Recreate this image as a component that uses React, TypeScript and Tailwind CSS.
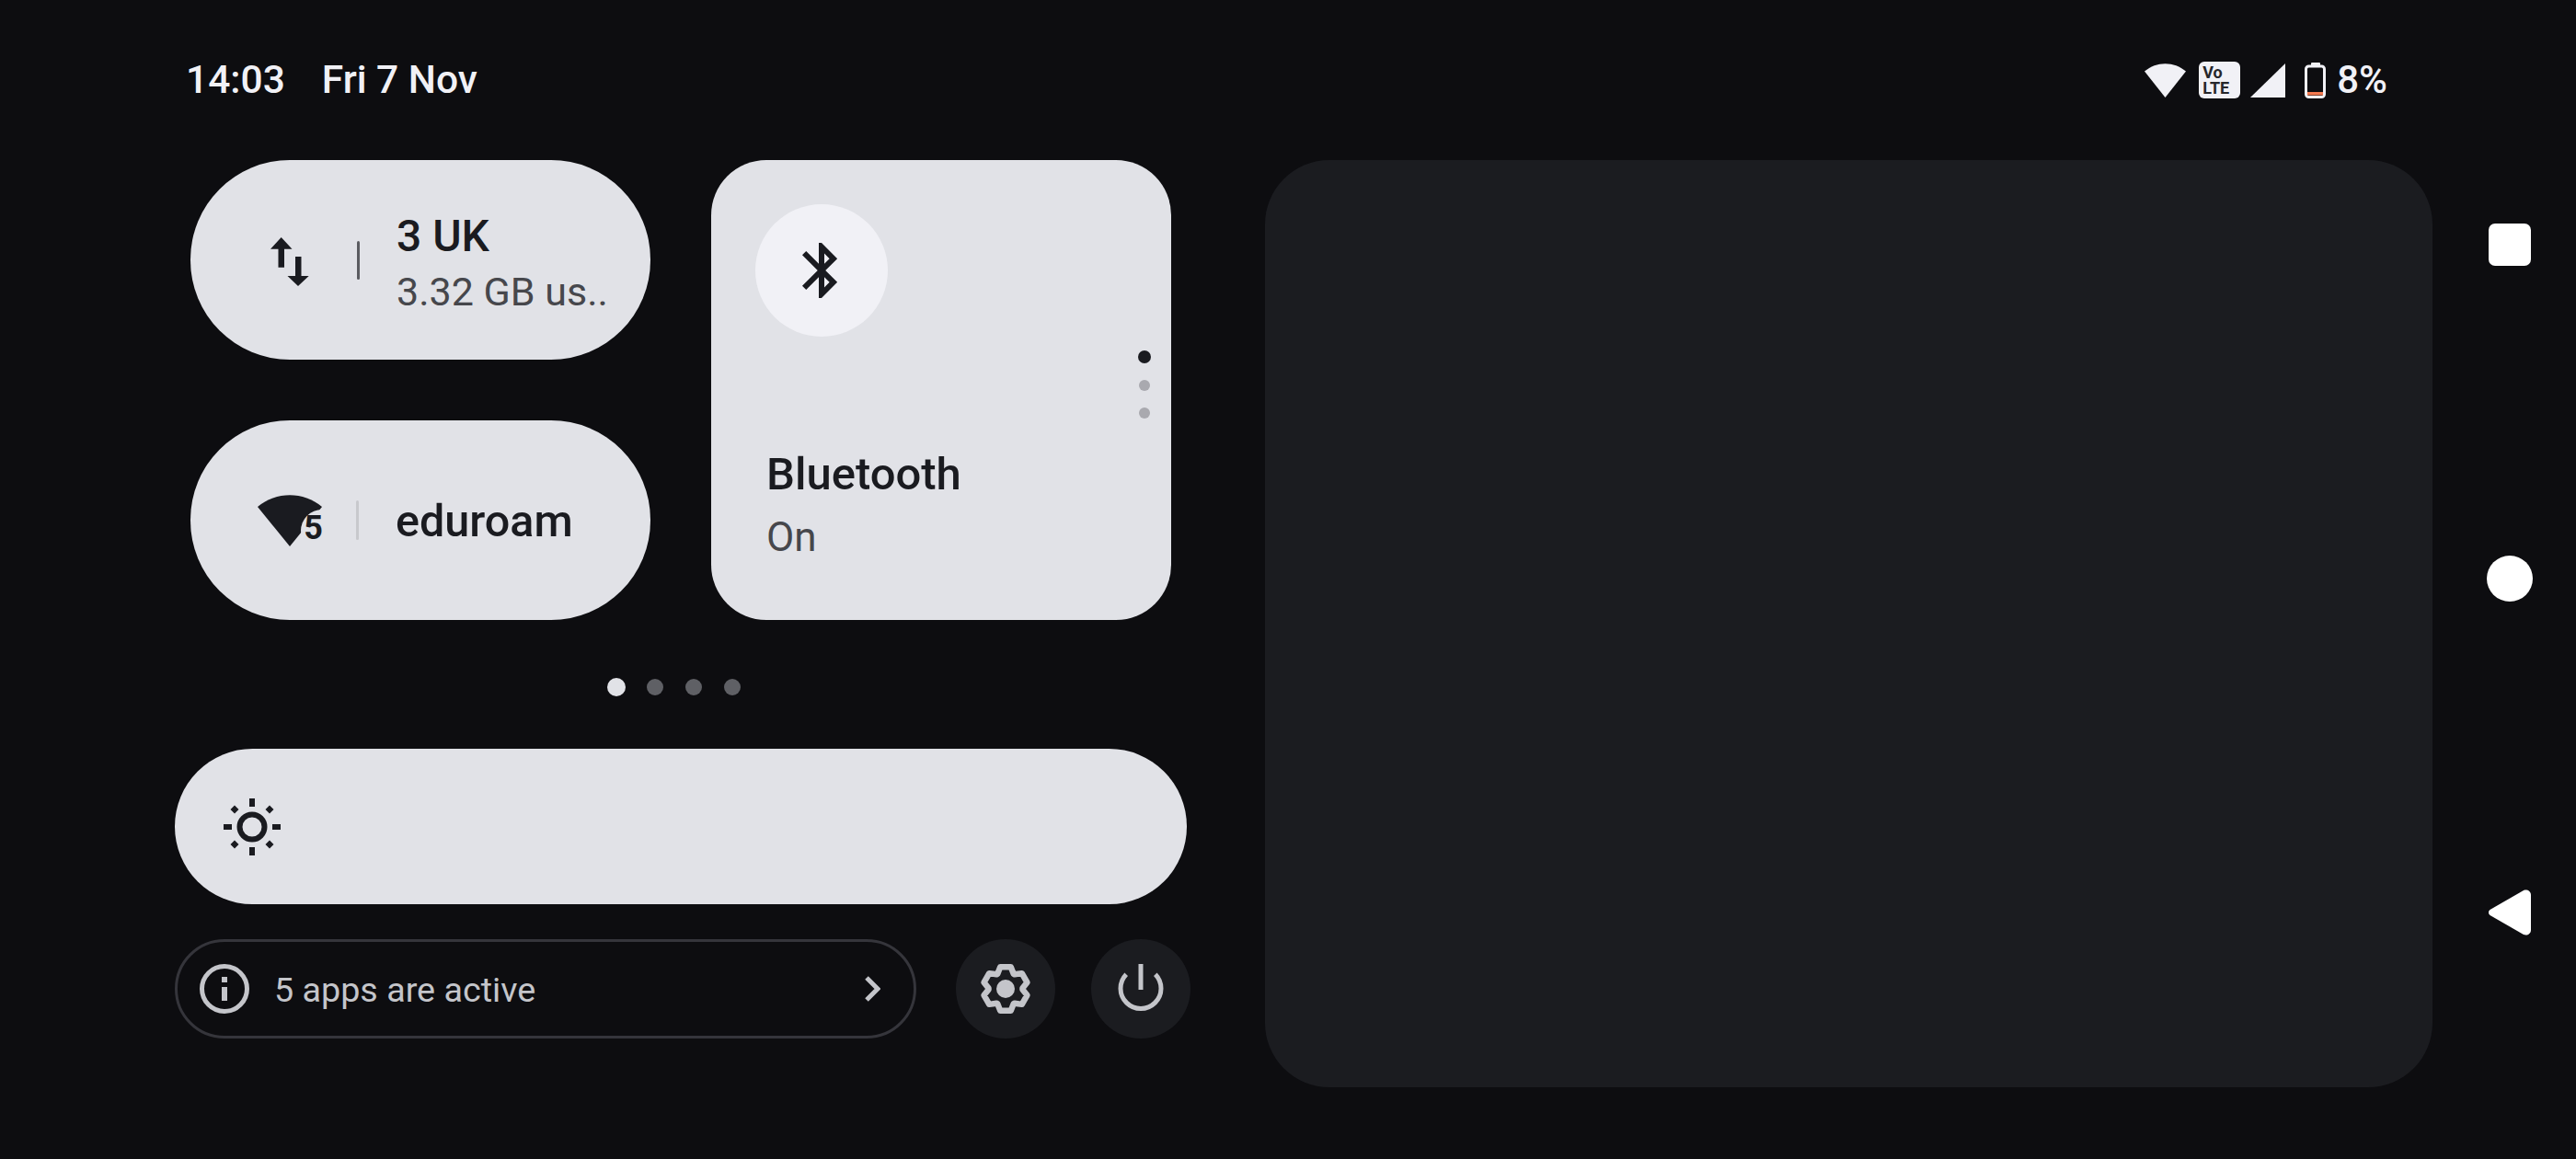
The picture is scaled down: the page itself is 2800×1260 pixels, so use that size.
import React from "react";

function gearPath() {
  const cx = 34, cy = 34;
  const pts: string[] = [];
  for (let i = 0; i < 6; i++) {
    const a = (i * 60 - 90) * Math.PI / 180;
    const spec: [number, number][] = [[-31, 18.5], [-15, 24.5], [15, 24.5], [31, 18.5]];
    for (const [d, r] of spec) {
      const t = a + d * Math.PI / 180 * 0.9;
      pts.push(`${(cx + r * Math.cos(t)).toFixed(2)} ${(cy + r * Math.sin(t)).toFixed(2)}`);
    }
  }
  return "M" + pts.join("L") + "Z";
}

function WifiWedge({ fill }: { fill: string }) {
  return <path d="M0 13 C20 -4 50 -4 70 13 L35 56 Z" fill={fill} />;
}

function DataTile() {
  return (
    <div className="flex h-[217px] w-[500px] items-center rounded-[108px] bg-[#e1e2e7] pl-[83px]">
      <svg width="50" height="60" viewBox="0 0 50 60" className="shrink-0 text-[#1a1b20]" fill="currentColor">
        <path d="M15.7 5L27.5 17.7H19V37.7H12.5V17.7H4Z" />
        <path d="M31 26H37.5V47H45.7L34 58L22.5 47H31Z" />
      </svg>
      <div className="ml-[48px] h-[42px] w-[3px] rounded-full bg-[#5a5b60]" />
      <div className="mt-[6px] ml-[40px] flex flex-col">
        <span className="text-[48px] leading-[56px] font-medium text-[#1a1b20]">3 UK</span>
        <span className="mt-[6px] text-[43px] leading-[52px] text-[#46474c] whitespace-nowrap">3.32 GB us..</span>
      </div>
    </div>
  );
}

function WifiTile() {
  return (
    <div className="flex h-[217px] w-[500px] items-center rounded-[108px] bg-[#e1e2e7] pl-[73px]">
      <div className="relative h-[56px] w-[70px] shrink-0">
        <svg width="70" height="56" viewBox="0 0 70 56">
          <WifiWedge fill="#1a1b20" />
          <circle cx="70" cy="39" r="23" fill="#e1e2e7" />
        </svg>
        <span className="absolute top-[16px] right-[-1px] text-[36px] leading-[40px] font-bold text-[#1a1b20]">5</span>
      </div>
      <div className="ml-[37px] h-[43px] w-[3px] rounded-full bg-[#c8c9cd]" />
      <span className="mt-[3px] ml-[40px] text-[48.5px] leading-[56px] font-medium text-[#1a1b20]">eduroam</span>
    </div>
  );
}

function BluetoothTile() {
  return (
    <div className="relative h-[500px] w-[500px] rounded-[60px] bg-[#e1e2e7] pt-[48px] pl-[48px]">
      <div className="flex h-[144px] w-[144px] items-center justify-center rounded-full bg-[#f1f1f6]">
        <svg width="72" height="72" viewBox="0 0 24 24" fill="#1a1b20">
          <path d="M17.71 7.71L12 2h-1v7.59L6.41 5 5 6.41 10.59 12 5 17.59 6.41 19 11 14.41V22h1l5.71-5.71-4.3-4.29 4.3-4.29zM13 5.83l1.88 1.88L13 9.59V5.83zm1.88 10.46L13 18.17v-3.76l1.88 1.88z" />
        </svg>
      </div>
      <div className="mt-[122px] ml-[12px] flex flex-col">
        <span className="text-[49px] leading-[56px] font-medium text-[#1a1b20]">Bluetooth</span>
        <span className="mt-[14px] text-[44px] leading-[52px] text-[#46474c]">On</span>
      </div>
      <div className="absolute top-[207px] right-[22px] flex flex-col items-center gap-[18px]">
        <span className="h-[14px] w-[14px] rounded-full bg-[#1a1b20]" />
        <span className="h-[12px] w-[12px] rounded-full bg-[#a9a9af]" />
        <span className="h-[12px] w-[12px] rounded-full bg-[#a9a9af]" />
      </div>
    </div>
  );
}

export default function App() {
  return (
    <div className="flex h-[1260px] w-[2800px] overflow-hidden bg-[#0d0d10] font-['Roboto',sans-serif]">
      <div className="flex w-[2644px] shrink-0 flex-col pl-[190px]">
        {/* status bar */}
        <div className="flex h-[174px] items-center justify-between pr-[49px] pl-[12px] text-[#f1f1f6]">
          <div className="flex gap-[40px] text-[42.5px] leading-[48px] font-medium">
            <span>14:03</span>
            <span>Fri 7 Nov</span>
          </div>
          <div className="flex items-center">
            <svg width="45" height="37" viewBox="0 0 70 56" preserveAspectRatio="none">
              <WifiWedge fill="#f1f1f6" />
            </svg>
            <div className="ml-[14px] flex h-[40px] w-[45px] flex-col justify-center rounded-[6px] bg-[#f1f1f6] pl-[4px] text-[18px] leading-[17px] font-bold text-[#26272b]">
              <span>Vo</span>
              <span>LTE</span>
            </div>
            <svg width="38" height="37" viewBox="0 0 38 37" className="ml-[11px]">
              <path d="M38 0V37H0Z" fill="#f1f1f6" />
            </svg>
            <svg width="23" height="39" viewBox="0 0 23 39" className="ml-[21px]">
              <rect x="7" y="0" width="10" height="5" rx="1" fill="#f1f1f6" />
              <rect x="1.5" y="4" width="20" height="33.5" rx="3" fill="none" stroke="#f1f1f6" strokeWidth="3" />
              <rect x="3" y="32" width="17" height="3.5" fill="#f47a50" />
            </svg>
            <span className="ml-[12px] text-[42px] leading-[48px] font-medium">8%</span>
          </div>
        </div>

        {/* content */}
        <div className="flex items-start gap-[81px]">
          <div className="flex w-[1104px] shrink-0 flex-col">
            <div className="flex gap-[66px] pl-[17px]">
              <div className="flex flex-col gap-[66px]">
                <DataTile />
                <WifiTile />
              </div>
              <BluetoothTile />
            </div>

            {/* page dots */}
            <div className="mt-[63px] flex h-[20px] items-center pl-[470px]">
              <span className="h-[20px] w-[20px] rounded-full bg-[#e1e2e7]" />
              <span className="ml-[23px] h-[18px] w-[18px] rounded-full bg-[#5f6065]" />
              <span className="ml-[24px] h-[18px] w-[18px] rounded-full bg-[#5f6065]" />
              <span className="ml-[24px] h-[18px] w-[18px] rounded-full bg-[#5f6065]" />
            </div>

            {/* brightness */}
            <div className="mt-[57px] flex h-[169px] w-[1100px] items-center rounded-[85px] bg-[#e1e2e7] pl-[53px]">
              <svg width="62" height="62" viewBox="0 0 62 62" fill="#1a1b20">
                <circle cx="31" cy="31" r="13.5" fill="none" stroke="#1a1b20" strokeWidth="6" />
                <rect x="28" y="0" width="6" height="9" />
                <rect x="28" y="53" width="6" height="9" />
                <rect x="0" y="28" width="9" height="6" />
                <rect x="53" y="28" width="9" height="6" />
                <path d="M12 7.5L16.5 12L12 16.5L7.5 12Z" />
                <path d="M50 7.5L54.5 12L50 16.5L45.5 12Z" />
                <path d="M12 45.5L16.5 50L12 54.5L7.5 50Z" />
                <path d="M50 45.5L54.5 50L50 54.5L45.5 50Z" />
              </svg>
            </div>

            {/* footer */}
            <div className="mt-[38px] flex items-center">
              <div className="flex h-[108px] w-[806px] items-center rounded-[54px] border-[3px] border-[#35353b] pl-[24px] text-[#c4c5ca]">
                <svg width="54" height="54" viewBox="0 0 54 54" className="shrink-0">
                  <circle cx="27" cy="27" r="24.5" fill="none" stroke="#c4c5ca" strokeWidth="5" />
                  <rect x="24" y="14" width="6" height="6" fill="#c4c5ca" />
                  <rect x="24" y="25" width="6" height="15" fill="#c4c5ca" />
                </svg>
                <span className="mt-[2px] ml-[27px] text-[37.7px] leading-[46px]">5 apps are active</span>
                <svg width="17" height="28" viewBox="0 0 17 28" className="mr-[36px] ml-auto shrink-0">
                  <path d="M2 2L14 14L2 26" fill="none" stroke="#c4c5ca" strokeWidth="5" />
                </svg>
              </div>
              <div className="ml-[43px] flex h-[108px] w-[108px] items-center justify-center rounded-full bg-[#1b1c20]">
                <svg width="68" height="68" viewBox="0 0 68 68">
                  <path d={gearPath()} fill="none" stroke="#c4c5ca" strokeWidth="6.5" strokeLinejoin="round" />
                  <circle cx="34" cy="34" r="10" fill="#c4c5ca" />
                </svg>
              </div>
              <div className="ml-[39px] flex h-[108px] w-[108px] items-center justify-center rounded-full bg-[#1b1c20]">
                <svg width="56" height="56" viewBox="-28 -28 56 56">
                  <path d="M-15.8 -15.8A22 22 0 1 0 15.8 -15.8" fill="none" stroke="#c4c5ca" strokeWidth="5" />
                  <rect x="-2.5" y="-27" width="5" height="28" fill="#c4c5ca" />
                </svg>
              </div>
            </div>
          </div>

          {/* panel */}
          <div className="h-[1008px] w-[1269px] shrink-0 rounded-[70px] bg-[#1b1c20]" />
        </div>
      </div>

      {/* navigation */}
      <div className="ml-[59px] flex w-[50px] flex-col items-center gap-[313px] pt-[241px]">
        <div className="flex h-[50px] items-center">
          <div className="h-[46px] w-[46px] rounded-[7px] bg-white" />
        </div>
        <div className="h-[50px] w-[50px] rounded-full bg-white" />
        <svg width="46" height="50" viewBox="0 0 46 50">
          <path d="M1.5 22L38 1C41.5 -0.5 46 1.5 46 6V44C46 48.5 41.5 50.5 38 49L1.5 28C-0.5 26.5 -0.5 23.5 1.5 22Z" fill="#fff" />
        </svg>
      </div>
    </div>
  );
}
